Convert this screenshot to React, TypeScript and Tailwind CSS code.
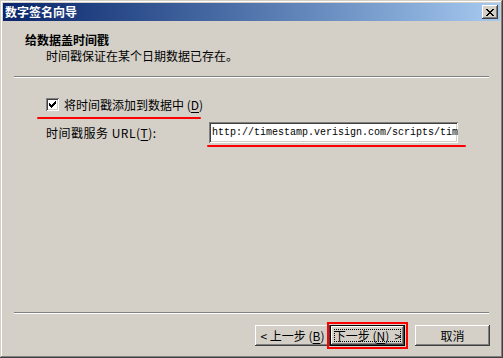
function ClassicButton({
  children,
  isDefault = false,
}: {
  children: React.ReactNode
  isDefault?: boolean
}) {
  return (
    <div
      className={
        isDefault
          ? 'relative h-[21px] w-[75px] outline-2 outline-[#ff0000] outline-offset-1'
          : 'relative h-[21px] w-[75px]'
      }
    >
      <button
        className={
          isDefault
            ? 'flex h-full w-full items-center justify-center bg-[#d4d0c8] text-[12px] leading-[16px] shadow-[inset_0_0_0_1px_#000000,inset_-2px_-2px_#404040,inset_2px_2px_#ffffff,inset_-3px_-3px_#808080]'
            : 'flex h-full w-full items-center justify-center bg-[#d4d0c8] text-[12px] leading-[16px] shadow-[inset_-1px_-1px_#404040,inset_1px_1px_#ffffff,inset_-2px_-2px_#808080,inset_2px_2px_#d4d0c8]'
        }
      >
        {children}
      </button>
      {isDefault && (
        <span className="pointer-events-none absolute inset-[4px] border border-dotted border-black" />
      )}
    </div>
  )
}

export default function App() {
  return (
    <div className="flex h-[358px] w-[503px] flex-col bg-[#d4d0c8] p-[3px] font-['Noto_Sans_CJK_SC',sans-serif] text-[12px] leading-[16px] text-black shadow-[inset_-1px_-1px_#404040,inset_1px_1px_#d4d0c8,inset_-2px_-2px_#808080,inset_2px_2px_#ffffff]">
      {/* title bar */}
      <div className="flex h-[18px] items-center justify-between bg-gradient-to-r from-[#0a246a] to-[#a6caf0] pr-[2px] pl-[2px]">
        <span className="font-bold text-white">数字签名向导</span>
        <div className="flex h-[14px] w-[16px] items-center justify-center bg-[#d4d0c8] shadow-[inset_-1px_-1px_#404040,inset_1px_1px_#ffffff,inset_-2px_-2px_#808080,inset_2px_2px_#d4d0c8]">
          <svg width="8" height="7" viewBox="0 0 8 7" shapeRendering="crispEdges">
            <path
              d="M0 0h2v1H0zM6 0h2v1H6zM1 1h2v1H1zM5 1h2v1H5zM2 2h4v1H2zM3 3h2v1H3zM2 4h4v1H2zM1 5h2v1H1zM5 5h2v1H5zM0 6h2v1H0zM6 6h2v1H6z"
              fill="#000"
            />
          </svg>
        </div>
      </div>

      {/* header */}
      <div className="mt-[11px] pl-[22px] font-bold">给数据盖时间戳</div>
      <div className="pl-[43px]">时间戳保证在某个日期数据已存在。</div>
      <div className="mx-[11px] mt-[12px] h-[2px] border-t border-b border-t-[#808080] border-b-white" />

      {/* body */}
      <div className="mt-[18px] flex h-[17px] items-center pl-[43px]">
        <div className="flex h-[13px] w-[13px] items-center justify-center bg-white shadow-[inset_1px_1px_#808080,inset_-1px_-1px_#ffffff,inset_2px_2px_#404040,inset_-2px_-2px_#d4d0c8]">
          <svg width="7" height="7" viewBox="0 0 7 7" shapeRendering="crispEdges">
            <path d="M6 0h1v3H6zM5 1h1v3H5zM4 2h1v3H4zM3 3h1v3H3zM2 4h1v3H2zM1 3h1v3H1zM0 2h1v3H0z" fill="#000" />
          </svg>
        </div>
        <span className="ml-[5px]">
          将时间戳添加到数据中 (<span className="underline underline-offset-2">D</span>)
        </span>
      </div>
      <div className="mt-[4px] ml-[34px] h-[2px] w-[164px] rounded-full bg-[#ff0000]" />

      <div className="mt-[3px] flex items-center pl-[43px]">
        <span className="w-[163px] tracking-[0.5px]">
          时间戳服务 URL(<span className="underline underline-offset-2">T</span>):
        </span>
        <div className="flex h-[21px] w-[249px] items-center overflow-hidden bg-white pl-[3px] shadow-[inset_1px_1px_#808080,inset_-1px_-1px_#ffffff,inset_2px_2px_#404040,inset_-2px_-2px_#d4d0c8]">
          <span className="whitespace-nowrap font-['Liberation_Mono',monospace] text-[10px] leading-[14px]">
            http://timestamp.verisign.com/scripts/tim
          </span>
        </div>
      </div>
      <div className="mt-[2px] ml-[204px] h-[2px] w-[259px] rounded-full bg-[#ff0000]" />

      {/* footer */}
      <div className="mt-auto mx-[11px] h-[2px] border-t border-b border-t-[#808080] border-b-white" />
      <div className="mt-[11px] mb-[9px] flex justify-end pr-[10px]">
        <ClassicButton>
          &lt; 上一步 (<span className="underline underline-offset-2">B</span>)
        </ClassicButton>
        <ClassicButton isDefault>
          下一步 (<span className="underline underline-offset-2">N</span>)&nbsp;&nbsp;&gt;
        </ClassicButton>
        <div className="ml-[10px]">
          <ClassicButton>取消</ClassicButton>
        </div>
      </div>
    </div>
  )
}
